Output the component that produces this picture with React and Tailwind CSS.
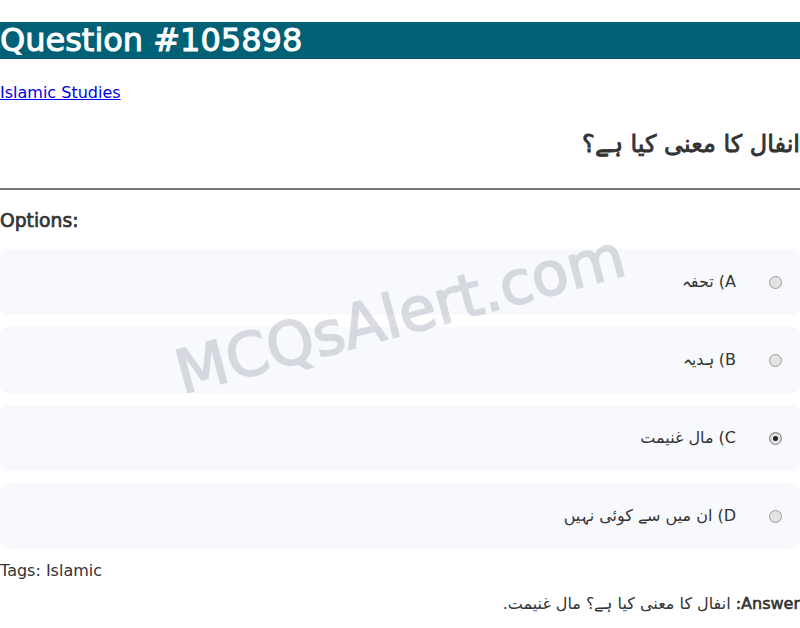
import React from "react";

const options = [
  { key: "A", text: "تحفہ" },
  { key: "B", text: "ہدیہ" },
  { key: "C", text: "مال غنیمت", checked: true },
  { key: "D", text: "ان میں سے کوئی نہیں" },
];

export default function App() {
  return (
    <div className="relative min-h-[628px] overflow-hidden bg-white text-[#333] font-['DejaVu_Sans',sans-serif] text-base">
      {/* header */}
      <h1 className="mt-[22px] bg-[#006075] text-white text-[32px] leading-[37px] font-normal [-webkit-text-stroke:1px_currentColor]">
        Question #105898
      </h1>

      <p className="mt-[24px] leading-[19px]">
        <a href="#" className="text-[#0000ee] underline">Islamic Studies</a>
      </p>

      <h2 dir="rtl" className="mt-[28px] text-[24px] leading-[28px] font-normal text-right [-webkit-text-stroke:0.8px_currentColor]">
        انفال کا معنی کیا ہے؟
      </h2>

      <hr className="mt-[30px] border-t-2 border-[#777]" />

      <h3 className="mt-[20px] text-[18.72px] leading-[21px] font-normal [-webkit-text-stroke:0.7px_currentColor]">
        Options:
      </h3>

      {/* options list */}
      <div className="mt-[18px] flex flex-col gap-[12px]">
        {options.map((o) => (
          <label
            key={o.key}
            dir="rtl"
            className="flex items-center gap-[33px] h-[66px] px-[18px] bg-[#f8f9fc] rounded-[8px]"
          >
            <input
              type="radio"
              name="opt"
              defaultChecked={o.checked}
              className="m-0 appearance-none w-[13px] h-[13px] rounded-full border border-[#9a9a9a] bg-[#e3e3e3] checked:bg-[#222] checked:shadow-[inset_0_0_0_3px_#e3e3e3]"
            />
            <span>{o.key}) {o.text}</span>
          </label>
        ))}
      </div>

      <p className="mt-[12px] leading-[19px]">Tags: Islamic</p>

      <p dir="rtl" className="mt-[14px] leading-[19px] text-right">
        <strong className="font-normal [-webkit-text-stroke:0.6px_currentColor]">Answer:</strong> انفال کا معنی کیا ہے؟ مال غنیمت.
      </p>

      {/* watermark */}
      <div className="pointer-events-none absolute inset-0 flex items-center justify-center">
        <span className="-rotate-[15deg] text-[60px] font-normal text-[#7d8294] opacity-[0.27] whitespace-nowrap [-webkit-text-stroke:1.8px_currentColor]">
          MCQsAlert.com
        </span>
      </div>
    </div>
  );
}
